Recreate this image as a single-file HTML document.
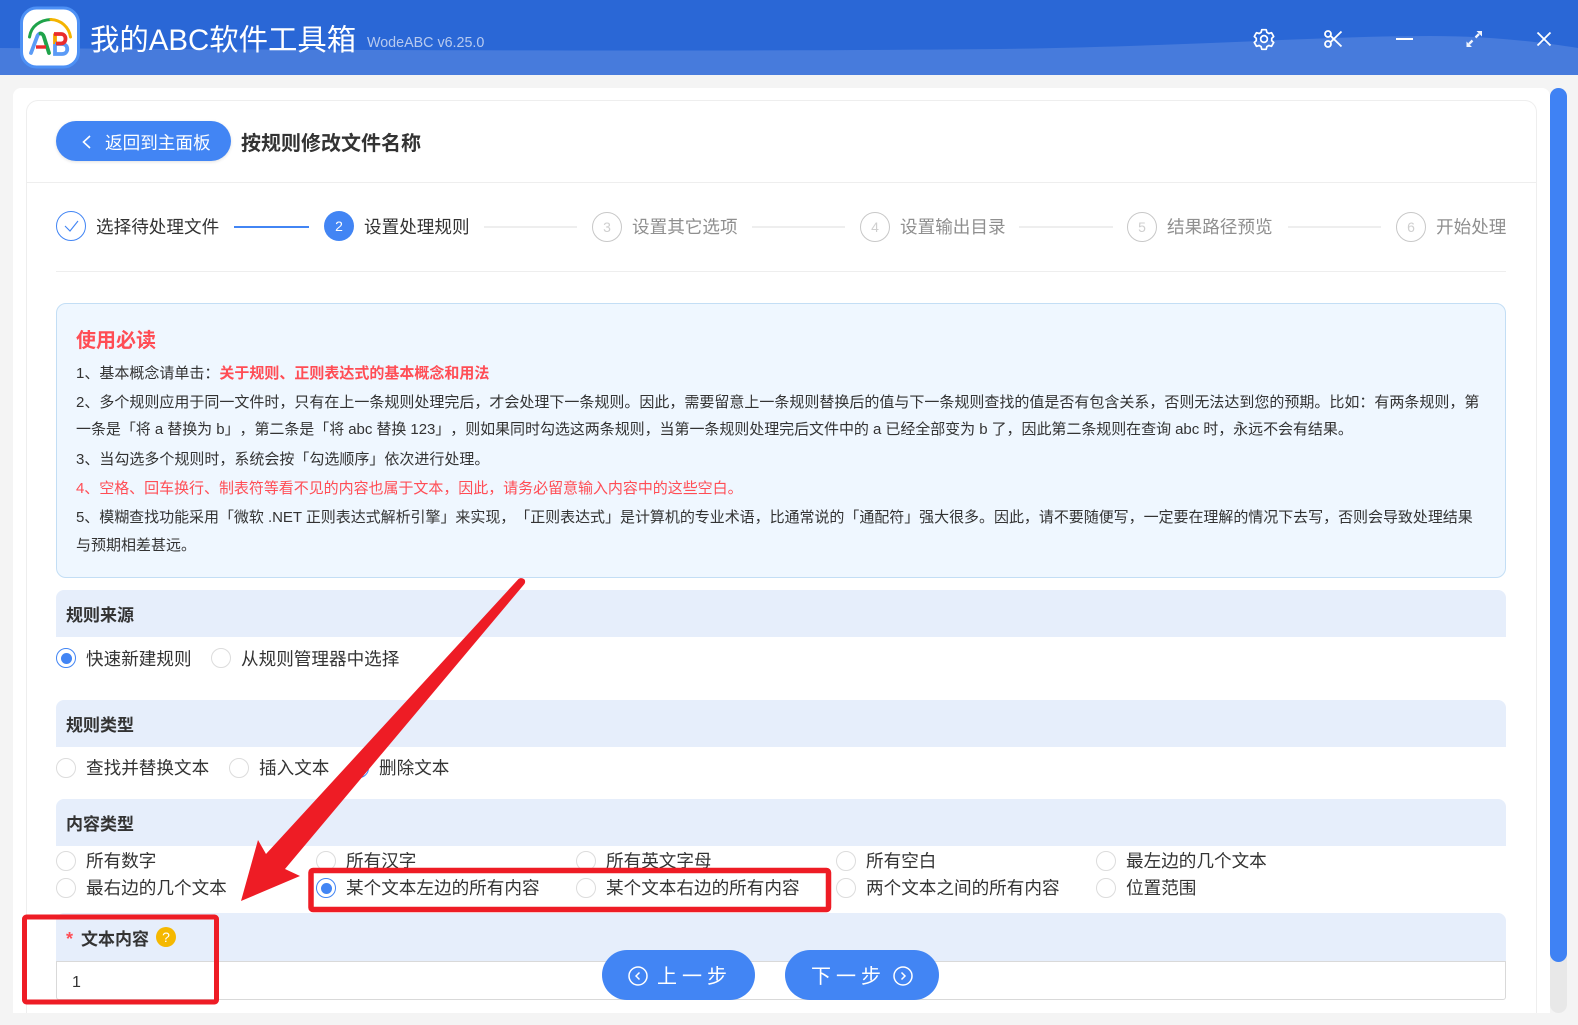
<!DOCTYPE html>
<html lang="zh">
<head>
<meta charset="utf-8">
<style>
html,body{margin:0;padding:0;width:1578px;height:1025px;overflow:hidden;background:#f4f4f4;font-family:"Liberation Sans","Noto Sans CJK SC",sans-serif;color:#333;text-spacing-trim:space-all;text-autospace:no-autospace}
.a{position:absolute;white-space:nowrap}
.t{position:absolute;white-space:nowrap;font-size:17.6px;line-height:24px;color:#333}
.g{color:#8f8f8f}
.c{position:absolute;width:28px;height:28px;border:1.5px solid #c8c8c8;border-radius:50%;top:212px;text-align:center;line-height:28px;font-size:14px;color:#cfcfcf;box-sizing:content-box}
.l{position:absolute;height:2px;top:226px;background:#eeeeee}
.n{position:absolute;left:76px;font-size:15px;line-height:24px;white-space:nowrap;color:#333}
.h{position:absolute;left:56px;width:1450px;background:#e6eefb;border-radius:8px 8px 0 0;height:47px}
.h b{position:absolute;left:10px;top:14px;font-size:17px;line-height:24px;color:#333}
.r{position:absolute;width:18px;height:18px;border:1.5px solid #dcdcdc;border-radius:50%;background:#fff}
.r.on{border-color:#4285f4}
.r.on:after{content:"";position:absolute;left:3.5px;top:3.5px;width:11px;height:11px;border-radius:50%;background:#4285f4}
.btn{position:absolute;background:#4285f4;color:#fff;border-radius:25px;height:50px;top:950px;font-size:20px;line-height:50px}
</style>
</head>
<body>
<!-- header -->
<svg class="a" style="left:0;top:0" width="1578" height="75">
<rect width="1578" height="75" fill="#2a67d6"/>
<path d="M0 48 C300 50 700 52 1000 49 C1200 46 1320 36 1430 36 C1490 36 1540 42 1578 48 L1578 75 L0 75Z" fill="#477bdc"/>
</svg>
<!-- logo -->
<svg class="a" style="left:18px;top:4px" width="64" height="68" viewBox="18 4 64 68">
<rect x="21.5" y="8" width="57" height="59" rx="15" fill="#fff" stroke="#4d90f5" stroke-width="3"/>
<path d="M29.5 37 C31 26 40 20 51 19.500" fill="none" stroke="#1fa34a" stroke-width="3" stroke-linecap="round"/>
<path d="M51 19.500 C61 20 69 27 70.500 37" fill="none" stroke="#f4b400" stroke-width="3" stroke-linecap="round"/>
<path d="M31 53 L37 37 C38 34 39 33.500 40.500 33.500" fill="none" stroke="#5b9bf6" stroke-width="3.800" stroke-linecap="round"/>
<path d="M40.500 33.500 C42 33.500 43 34 44 37 L49 53" fill="none" stroke="#1fa34a" stroke-width="3.800" stroke-linecap="round"/>
<path d="M36 47 H46" stroke="#ea2b2b" stroke-width="3.400"/>
<path d="M55 33.500 V44" stroke="#f4a400" stroke-width="3.800"/>
<path d="M55 44 V54 H62 C69 54 69 44 62 44 H55" fill="none" stroke="#5b9bf6" stroke-width="3.800"/>
<path d="M54 34 H61 C67 34 67 43.500 61 43.500 H56" fill="none" stroke="#ea2b2b" stroke-width="3.800"/>
</svg>
<div class="a" style="left:90px;top:20px;font-size:29.4px;line-height:42px;color:#fff">我的ABC软件工具箱</div>
<div class="a" style="left:367px;top:32px;font-size:14.3px;line-height:22px;color:#b7caef">WodeABC v6.25.0</div>
<!-- window icons -->
<svg class="a" style="left:1252px;top:27px" width="24" height="24" viewBox="0 0 24 24" fill="none" stroke="#fff" stroke-width="1.700" stroke-linejoin="round">
<path d="M9.800 2.700h4.400l.7 2.700 1.900 1.100 2.700-.8 2.200 3.800-2 1.900v2.200l2 1.900-2.200 3.800-2.700-.8-1.900 1.100-.7 2.700H9.800l-.7-2.700-1.900-1.100-2.700.8-2.200-3.800 2-1.900v-2.200l-2-1.900 2.200-3.800 2.700.8 1.900-1.100z"/>
<circle cx="12" cy="12" r="3.400"/>
</svg>
<svg class="a" style="left:1321px;top:27px" width="24" height="24" viewBox="0 0 24 24" fill="none" stroke="#fff" stroke-width="1.800">
<circle cx="7" cy="7" r="3"/><circle cx="7" cy="17" r="3"/>
<path d="M9.500 8.800 L20.500 19.500 M9.500 15.200 L20.500 4.500"/>
</svg>
<div class="a" style="left:1396px;top:38px;width:17px;height:2px;background:#fff"></div>
<svg class="a" style="left:1464px;top:29px" width="20" height="20" viewBox="0 0 20 20" fill="none" stroke="#f0f4fd" stroke-width="2.300">
<path d="M5 15 L8.500 11.500 M11.500 8.500 L15 5"/>
<path d="M2.500 18 V12.500 L8 18Z M18 2 V7.500 L12.500 2Z" fill="#f0f4fd" stroke="none"/>
</svg>
<svg class="a" style="left:1536px;top:31px" width="16" height="16" viewBox="0 0 16 16" fill="none" stroke="#fff" stroke-width="1.800">
<path d="M1.500 1.500 L14.500 14.500 M14.500 1.500 L1.500 14.500"/>
</svg>

<!-- panel -->
<div class="a" style="left:13px;top:88px;width:1537px;height:925px;background:#fff;border-radius:8px 8px 0 0"></div>
<div class="a" style="left:26px;top:100px;width:1511px;height:913px;box-sizing:border-box;border:1px solid #eeeeee;border-bottom:0;border-radius:12px 12px 0 0"></div>
<div class="a" style="left:26px;top:182px;width:1511px;height:1px;background:#eeeeee"></div>
<!-- scrollbar -->
<div class="a" style="left:1550px;top:88px;width:17px;height:925px;background:#e8e8e8;border-radius:9px"></div>
<div class="a" style="left:1550px;top:88px;width:17px;height:874px;background:#3f82f4;border-radius:9px"></div>

<!-- back button -->
<div class="a" style="left:56px;top:121px;width:175px;height:40px;background:#4285f4;border-radius:20px;box-shadow:0 1px 3px rgba(0,0,0,.12)"></div>
<svg class="a" style="left:80px;top:134px" width="14" height="16" fill="none" stroke="#fff" stroke-width="1.600"><path d="M10 2 L3.500 8 L10 14"/></svg>
<div class="a" style="left:105px;top:131px;font-size:17.6px;line-height:24px;color:#fff">返回到主面板</div>
<div class="a" style="left:241px;top:130px;font-size:20px;line-height:28px;font-weight:bold;color:#333">按规则修改文件名称</div>

<!-- steps -->
<div class="a" style="left:56px;top:211px;width:28px;height:28px;border:1.500px solid #4285f4;border-radius:50%"></div>
<svg class="a" style="left:63px;top:218px" width="17" height="17" fill="none" stroke="#4285f4" stroke-width="1.100"><path d="M2 8 L7 13 L15 3"/></svg>
<div class="t" style="left:96px;top:215px">选择待处理文件</div>
<div class="a" style="left:234px;top:226px;width:75px;height:2px;background:#4285f4"></div>
<div class="a" style="left:324px;top:211px;width:30px;height:30px;background:#4285f4;border-radius:50%;color:#fff;text-align:center;line-height:30px;font-size:14px">2</div>
<div class="t" style="left:364px;top:215px">设置处理规则</div>
<div class="l" style="left:484px;width:93px"></div>
<div class="c" style="left:592px">3</div>
<div class="t g" style="left:632px;top:215px">设置其它选项</div>
<div class="l" style="left:752px;width:93px"></div>
<div class="c" style="left:860px">4</div>
<div class="t g" style="left:900px;top:215px">设置输出目录</div>
<div class="l" style="left:1019px;width:94px"></div>
<div class="c" style="left:1127px">5</div>
<div class="t g" style="left:1167px;top:215px">结果路径预览</div>
<div class="l" style="left:1288px;width:93px"></div>
<div class="c" style="left:1396px">6</div>
<div class="t g" style="left:1436px;top:215px">开始处理</div>
<div class="a" style="left:56px;top:271px;width:1450px;height:1px;background:#eeeeee"></div>

<!-- notice -->
<div class="a" style="left:56px;top:303px;width:1450px;height:275px;box-sizing:border-box;background:#eff7ff;border:1px solid #c3def5;border-radius:10px"></div>
<div class="a" style="left:76px;top:327px;font-size:20px;line-height:28px;font-weight:bold;color:#ff4d55">使用必读</div>
<div class="n" style="top:362px">1、基本概念请单击：<b style="color:#ff4d55;font-weight:bold">关于规则、正则表达式的基本概念和用法</b></div>
<div class="n" style="top:391px">2、多个规则应用于同一文件时，只有在上一条规则处理完后，才会处理下一条规则。因此，需要留意上一条规则替换后的值与下一条规则查找的值是否有包含关系，否则无法达到您的预期。比如：有两条规则，第</div>
<div class="n" style="top:418px;letter-spacing:-.05px">一条是「将 a 替换为 b」，第二条是「将 abc 替换 123」，则如果同时勾选这两条规则，当第一条规则处理完后文件中的 a 已经全部变为 b 了，因此第二条规则在查询 abc 时，永远不会有结果。</div>
<div class="n" style="top:448px">3、当勾选多个规则时，系统会按「勾选顺序」依次进行处理。</div>
<div class="n" style="top:477px;color:#ff4d55;letter-spacing:-.04px">4、空格、回车换行、制表符等看不见的内容也属于文本，因此，请务必留意输入内容中的这些空白。</div>
<div class="n" style="top:506px;letter-spacing:-.04px">5、模糊查找功能采用「微软 .NET 正则表达式解析引擎」来实现，「正则表达式」是计算机的专业术语，比通常说的「通配符」强大很多。因此，请不要随便写，一定要在理解的情况下去写，否则会导致处理结果</div>
<div class="n" style="top:534px">与预期相差甚远。</div>

<!-- 规则来源 -->
<div class="h" style="top:590px"><b>规则来源</b></div>
<div class="r on" style="left:56px;top:648px"></div><div class="t" style="left:86px;top:647px">快速新建规则</div>
<div class="r" style="left:211px;top:648px"></div><div class="t" style="left:241px;top:647px">从规则管理器中选择</div>

<!-- 规则类型 -->
<div class="h" style="top:700px"><b>规则类型</b></div>
<div class="r" style="left:56px;top:758px"></div><div class="t" style="left:86px;top:756px">查找并替换文本</div>
<div class="r" style="left:229px;top:758px"></div><div class="t" style="left:259px;top:756px">插入文本</div>
<div class="r on" style="left:349px;top:758px"></div><div class="t" style="left:379px;top:756px">删除文本</div>

<!-- 内容类型 -->
<div class="h" style="top:799px"><b>内容类型</b></div>
<div class="r" style="left:56px;top:851px"></div><div class="t" style="left:86px;top:849px">所有数字</div>
<div class="r" style="left:316px;top:851px"></div><div class="t" style="left:346px;top:849px">所有汉字</div>
<div class="r" style="left:576px;top:851px"></div><div class="t" style="left:606px;top:849px">所有英文字母</div>
<div class="r" style="left:836px;top:851px"></div><div class="t" style="left:866px;top:849px">所有空白</div>
<div class="r" style="left:1096px;top:851px"></div><div class="t" style="left:1126px;top:849px">最左边的几个文本</div>
<div class="r" style="left:56px;top:878px"></div><div class="t" style="left:86px;top:876px">最右边的几个文本</div>
<div class="r on" style="left:316px;top:878px"></div><div class="t" style="left:346px;top:876px">某个文本左边的所有内容</div>
<div class="r" style="left:576px;top:878px"></div><div class="t" style="left:606px;top:876px">某个文本右边的所有内容</div>
<div class="r" style="left:836px;top:878px"></div><div class="t" style="left:866px;top:876px">两个文本之间的所有内容</div>
<div class="r" style="left:1096px;top:878px"></div><div class="t" style="left:1126px;top:876px">位置范围</div>

<!-- 文本内容 -->
<div class="h" style="top:913px;height:48px"></div>
<div class="a" style="left:66px;top:927px;font-size:18px;line-height:24px;color:#ff4d55;font-weight:bold">*</div>
<div class="a" style="left:81px;top:928px;font-size:17px;line-height:24px;font-weight:bold;color:#333">文本内容</div>
<div class="a" style="left:156px;top:927px;width:20px;height:20px;border-radius:50%;background:#f5b800;color:#fff;font-size:14px;line-height:20px;text-align:center">?</div>
<div class="a" style="left:56px;top:961px;width:1450px;height:39px;box-sizing:border-box;background:#fff;border:1px solid #d9d9d9;border-radius:0 0 3px 3px"></div>
<div class="a" style="left:72px;top:971px;font-size:16px;line-height:24px;color:#333">1</div>

<!-- nav buttons -->
<div class="btn" style="left:602px;width:153px"></div>
<svg class="a" style="left:627px;top:965px" width="22" height="22" fill="none" stroke="#fff" stroke-width="1.500"><circle cx="11" cy="11" r="9"/><path d="M12.500 7.500 L9 11 L12.500 14.500"/></svg>
<div class="a" style="left:657px;top:963px;font-size:20px;line-height:28px;color:#fff;letter-spacing:5px">上一步</div>
<div class="btn" style="left:785px;width:154px"></div>
<svg class="a" style="left:892px;top:965px" width="22" height="22" fill="none" stroke="#fff" stroke-width="1.500"><circle cx="11" cy="11" r="9"/><path d="M9.500 7.500 L13 11 L9.500 14.500"/></svg>
<div class="a" style="left:811px;top:963px;font-size:20px;line-height:28px;color:#fff;letter-spacing:5px">下一步</div>

<!-- annotations -->
<svg class="a" style="left:0;top:0" width="1578" height="1025">
<path d="M518.500 579 C520.500 577.500 523 578 524.500 579.500 C525.500 581 525.300 583 524 584.500 L285 869 L300 876 L241 901 L258 840 L266 854Z" fill="#ee1c25"/>
<rect x="311" y="870.500" width="517.500" height="39" rx="2" fill="none" stroke="#ee1c25" stroke-width="5.500"/>
<rect x="24.500" y="917" width="192" height="85" rx="2" fill="none" stroke="#ee1c25" stroke-width="5"/>
</svg>
</body>
</html>
